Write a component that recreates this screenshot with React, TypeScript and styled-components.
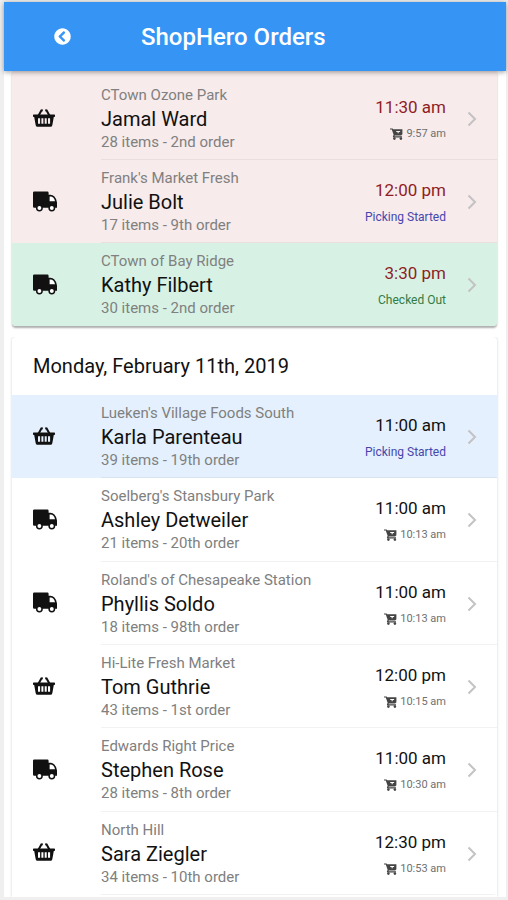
import React from "react";
import styled, { createGlobalStyle } from "styled-components";
import { FaChevronCircleLeft } from "react-icons/fa";

const GlobalStyle = createGlobalStyle`
  *, *::before, *::after { box-sizing: border-box; }
  body {
    margin: 0;
    background: #fff;
    font-family: Roboto, "Liberation Sans", sans-serif;
    color: #111;
  }
`;

const Screen = styled.div`
  min-height: 100vh;
  display: flex;
  flex-direction: column;
  background: #fff;
  border: solid #efefef;
  border-width: 2px 2px 3px 4px;
`;

const Toolbar = styled.header`
  display: grid;
  grid-template-columns: 116px 1fr 116px;
  align-items: center;
  height: 69px;
  background: #3695f4;
  color: #fff;
  box-shadow: 0 1px 5px rgba(0, 0, 0, 0.4);
  z-index: 1;
`;

const BackButton = styled.button`
  justify-self: center;
  display: flex;
  padding: 0;
  border: 0;
  background: none;
  color: #fff;
  font-size: 17px;
  cursor: pointer;
`;

const Title = styled.h1`
  margin: 0;
  padding-left: 21px;
  font-size: 24px;
  line-height: 32px;
  font-weight: 500;
  white-space: nowrap;
`;

const Content = styled.main`
  flex: 1;
  display: flex;
  flex-direction: column;
  gap: 11px;
  padding: 0 9px 0 8px;
`;

const Card = styled.section<{ $grow?: boolean }>`
  flex: ${(p) => (p.$grow ? "1 0 auto" : "none")};
  display: flex;
  flex-direction: column;
  padding: ${(p) => (p.$grow ? "0 0 2px" : "6px 0 0")};
  background: ${(p) => (p.$grow ? "#fff" : "#f7ebeb")};
  border-radius: ${(p) => (p.$grow ? "4px 4px 0 0" : "0 0 4px 4px")};
  box-shadow: ${(p) =>
    p.$grow ? "0 0 3px rgba(0, 0, 0, 0.18)" : "0 2px 2px rgba(0, 0, 0, 0.32)"};
  clip-path: ${(p) => (p.$grow ? "inset(0 -4px 0 -4px)" : "none")};
`;

const DateHeading = styled.h2`
  margin: 0;
  padding: 17px 21px;
  font-size: 20px;
  line-height: 24px;
  font-weight: 400;
`;

const List = styled.ul`
  flex: 1;
  display: grid;
  grid-auto-rows: minmax(83px, 1fr);
  margin: 0;
  padding: 0;
  list-style: none;
  border-radius: 0 0 4px 4px;
  overflow: hidden;
`;

type Tone = "late" | "done" | "picking" | "plain";

const toneColor: Record<Tone, string> = {
  late: "#f7ebeb",
  done: "#d7f2e4",
  picking: "#e4f0fd",
  plain: "#fff",
};

const Row = styled.a<{ $tone: Tone }>`
  display: grid;
  grid-template-columns: 89px 1fr;
  height: 100%;
  background: ${(p) => toneColor[p.$tone]};
  color: inherit;
  text-decoration: none;
`;

const IconCell = styled.span`
  display: flex;
  align-items: center;
  padding-left: 21px;
`;

const RowBody = styled.span<{ $line: boolean }>`
  display: flex;
  align-items: center;
  padding: 2px 20px 0 0;
  border-bottom: 1px solid ${(p) => (p.$line ? "rgba(0, 0, 0, 0.05)" : "transparent")};
`;

const Details = styled.span`
  flex: 1;
  min-width: 0;
  display: flex;
  flex-direction: column;
  white-space: nowrap;
`;

const Meta = styled.span`
  font-size: 15px;
  line-height: 23px;
  color: #808080;
`;

const Customer = styled.span`
  font-size: 20px;
  line-height: 24px;
`;

const Timing = styled.span`
  display: flex;
  flex-direction: column;
  align-items: flex-end;
  gap: 3px;
  padding-top: 3px;
  white-space: nowrap;
`;

const Time = styled.span<{ $late: boolean }>`
  font-size: 17px;
  line-height: 24px;
  color: ${(p) => (p.$late ? "#8f1d24" : "#111")};
`;

const statusColor = { started: "#4646ae", out: "#337a45", cart: "#707070" };
type StatusKind = keyof typeof statusColor;

const Status = styled.span<{ $kind: StatusKind }>`
  display: flex;
  align-items: center;
  gap: 3px;
  font-size: ${(p) => (p.$kind === "cart" ? "11px" : "12px")};
  line-height: 24px;
  color: ${(p) => statusColor[p.$kind]};
`;

const CartGlyph = styled.svg`
  width: 13px;
  height: 12px;
  fill: #444;
`;

const Chevron = styled.svg`
  width: 10px;
  height: 16px;
  margin-left: 21px;
  fill: none;
  stroke: #c4c2c4;
  stroke-width: 2;
`;

const Glyph = styled.svg`
  width: 25px;
  height: 22px;
  fill: #111;
`;

function BasketIcon() {
  return (
    <Glyph viewBox="0 0 25 22" role="img" aria-label="Pickup">
      <path
        d="M5.6 7.5 8.4 2.4 9.8 2.2M16.4 7.5 13.6 2.4 12.2 2.2"
        fill="none"
        stroke="#111"
        strokeWidth="2"
      />
      <path
        fillRule="evenodd"
        d="M.7 6.4H21.3Q22 6.4 22 7.2V8.3Q22 9 21.3 9H20.8L19.3 17.3Q19 18.8 17.6 18.8H4.4Q3 18.8 2.7 17.3L1.2 9H.7Q0 9 0 8.3V7.2Q0 6.4.7 6.4ZM5 10.3V15.8H7.1V10.3ZM8.4 10.3V15.8H10.4V10.3ZM11.7 10.3V15.8H13.7V10.3ZM15 10.3V15.8H17.1V10.3Z"
      />
    </Glyph>
  );
}

function TruckIcon() {
  return (
    <Glyph viewBox="0 1 25 22" role="img" aria-label="Delivery">
      <path d="M1.2 1.5H14.4Q15.6 1.5 15.6 2.8V4.8H17.5Q19.8 4.8 21.4 6.6Q24 9.5 24 12.4V17.8H1.2Q0 17.8 0 16.5V2.8Q0 1.5 1.2 1.5Z" />
      <path fill="#fff" d="M16.6 6.4H17.5Q19.2 6.4 20.4 7.8 21.6 9.3 22 11.2H16.6Z" />
      <circle cx="6.4" cy="18" r="2.7" fill="#fff" stroke="#111" strokeWidth="1.5" />
      <circle cx="18.8" cy="18" r="2.7" fill="#fff" stroke="#111" strokeWidth="1.5" />
    </Glyph>
  );
}

function CartIcon() {
  return (
    <CartGlyph viewBox="0 0 13 12" aria-hidden>
      <path
        fillRule="evenodd"
        d="M0 .4H2.6L3.2 1.2H12.4V6.2L11.2 7.4H4.8L4.4 8.3H12V9.4H3.4Q2.6 9 3 8.1L3.7 6.9 1.8 1.5H0ZM6.2 3V4H7.6V5.3H8.7V4H10.1V3Z"
      />
      <circle cx="4.4" cy="10.6" r="1.3" />
      <circle cx="10.9" cy="10.6" r="1.3" />
    </CartGlyph>
  );
}

interface Order {
  store: string;
  name: string;
  info: string;
  time: string;
  status: string;
  kind: StatusKind;
  delivery?: boolean;
  tone: Tone;
}

const today: Order[] = [
  { store: "CTown Ozone Park", name: "Jamal Ward", info: "28 items - 2nd order", time: "11:30 am", status: "9:57 am", kind: "cart", tone: "late" },
  { store: "Frank's Market Fresh", name: "Julie Bolt", info: "17 items - 9th order", time: "12:00 pm", status: "Picking Started", kind: "started", delivery: true, tone: "late" },
  { store: "CTown of Bay Ridge", name: "Kathy Filbert", info: "30 items - 2nd order", time: "3:30 pm", status: "Checked Out", kind: "out", delivery: true, tone: "done" },
];

const monday: Order[] = [
  { store: "Lueken's Village Foods South", name: "Karla Parenteau", info: "39 items - 19th order", time: "11:00 am", status: "Picking Started", kind: "started", tone: "picking" },
  { store: "Soelberg's Stansbury Park", name: "Ashley Detweiler", info: "21 items - 20th order", time: "11:00 am", status: "10:13 am", kind: "cart", delivery: true, tone: "plain" },
  { store: "Roland's of Chesapeake Station", name: "Phyllis Soldo", info: "18 items - 98th order", time: "11:00 am", status: "10:13 am", kind: "cart", delivery: true, tone: "plain" },
  { store: "Hi-Lite Fresh Market", name: "Tom Guthrie", info: "43 items - 1st order", time: "12:00 pm", status: "10:15 am", kind: "cart", tone: "plain" },
  { store: "Edwards Right Price", name: "Stephen Rose", info: "28 items - 8th order", time: "11:00 am", status: "10:30 am", kind: "cart", delivery: true, tone: "plain" },
  { store: "North Hill", name: "Sara Ziegler", info: "34 items - 10th order", time: "12:30 pm", status: "10:53 am", kind: "cart", tone: "plain" },
];

function OrderList({ orders, late = false }: { orders: Order[]; late?: boolean }) {
  return (
    <List>
      {orders.map((o) => (
        <li key={o.name}>
          <Row href="#order" $tone={o.tone}>
            <IconCell>{o.delivery ? <TruckIcon /> : <BasketIcon />}</IconCell>
            <RowBody $line={o.tone !== "done"}>
              <Details>
                <Meta>{o.store}</Meta>
                <Customer>{o.name}</Customer>
                <Meta>{o.info}</Meta>
              </Details>
              <Timing>
                <Time $late={late}>{o.time}</Time>
                <Status $kind={o.kind}>
                  {o.kind === "cart" && <CartIcon />}
                  {o.status}
                </Status>
              </Timing>
              <Chevron viewBox="0 0 10 16" aria-hidden>
                <path d="M1.5 1.5 8 8 1.5 14.5" />
              </Chevron>
            </RowBody>
          </Row>
        </li>
      ))}
    </List>
  );
}

export default function App() {
  return (
    <>
      <GlobalStyle />
      <Screen>
        <Toolbar>
          <BackButton type="button" aria-label="Back">
            <FaChevronCircleLeft />
          </BackButton>
          <Title>ShopHero Orders</Title>
        </Toolbar>
        <Content>
          <Card>
            <OrderList orders={today} late />
          </Card>
          <Card $grow>
            <DateHeading>Monday, February 11th, 2019</DateHeading>
            <OrderList orders={monday} />
          </Card>
        </Content>
      </Screen>
    </>
  );
}
